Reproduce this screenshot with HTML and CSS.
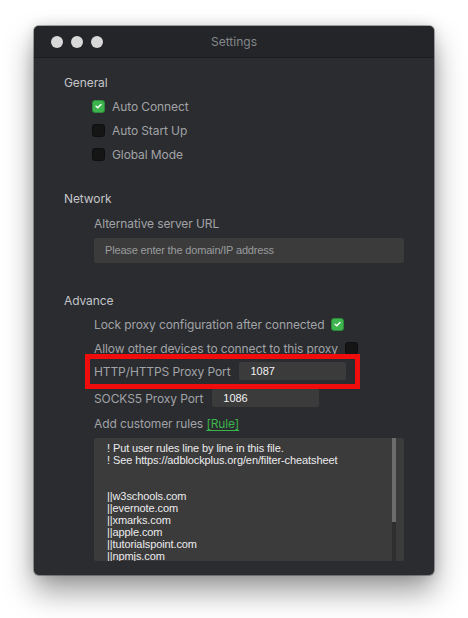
FILE: index.html
```html
<!DOCTYPE html>
<html>
<head>
<meta charset="utf-8">
<link rel="stylesheet" href="styles.css">
</head>
<body>
<div class="window">
  <div class="titlebar">
    <div class="lights"><span class="light"></span><span class="light"></span><span class="light"></span></div>
    <div class="title">Settings</div>
  </div>
  <div class="content">
    <div class="heading first">General</div>
    <div class="check-row"><span class="box checked"><svg viewBox="0 0 12 12" width="12" height="12"><path d="M3.3 6.2 L5.2 8 L8.7 4.4" fill="none" stroke="#fff" stroke-width="1.5" stroke-linecap="round" stroke-linejoin="round"/></svg></span><span class="label">Auto Connect</span></div>
    <div class="check-row"><span class="box"></span><span class="label">Auto Start Up</span></div>
    <div class="check-row"><span class="box"></span><span class="label">Global Mode</span></div>

    <div class="heading net">Network</div>
    <div class="sub-row url-label"><span class="label">Alternative server URL</span></div>
    <div class="url-input">Please enter the domain/IP address</div>

    <div class="heading adv">Advance</div>
    <div class="sub-row"><span class="label">Lock proxy configuration after connected</span><span class="box checked after"><svg viewBox="0 0 12 12" width="12" height="12"><path d="M3.3 6.2 L5.2 8 L8.7 4.4" fill="none" stroke="#fff" stroke-width="1.5" stroke-linecap="round" stroke-linejoin="round"/></svg></span></div>
    <div class="sub-row"><span class="label">Allow other devices to connect to this proxy</span><span class="box after"></span></div>
    <div class="sub-row port-row highlight"><span class="label">HTTP/HTTPS Proxy Port</span><span class="port-input">1087</span></div>
    <div class="sub-row port-row socks"><span class="label">SOCKS5 Proxy Port</span><span class="port-input">1086</span></div>
    <div class="sub-row rules-row"><span class="label">Add customer rules <span class="rule-link">[Rule]</span></span></div>
    <div class="rules">
      <div class="rules-text">! Put user rules line by line in this file.
! See https://adblockplus.org/en/filter-cheatsheet


||w3schools.com
||evernote.com
||xmarks.com
||apple.com
||tutorialspoint.com
||npmjs.com</div>
      <div class="scroll-track"><div class="scroll-thumb"></div></div>
    </div>
  </div>
</div>
</body>
</html>
```

FILE: styles.css
```css
*, *::before, *::after { box-sizing: border-box; }
html, body { margin: 0; background: #ffffff; }
body {
  padding: 26px 0 0 34px;
  min-height: 618px;
  font-family: "Inter", "Liberation Sans", sans-serif;
  font-size: 12px;
}
.window {
  width: 400px;
  height: 549px;
  background: #2a2c30;
  border-radius: 5px;
  overflow: hidden;
  box-shadow: 0 0 0 1px rgba(0,0,0,0.3), 0 0 14px rgba(0,0,0,0.14), 0 16px 30px rgba(0,0,0,0.4);
  display: flex;
  flex-direction: column;
}
.titlebar {
  height: 32px;
  flex: none;
  background: #232529;
  border-bottom: 1px solid #1b1c1f;
  display: flex;
  align-items: center;
  position: relative;
}
.lights {
  display: flex;
  gap: 8px;
  padding-left: 17px;
}
.light {
  width: 12px;
  height: 12px;
  border-radius: 50%;
  background: #d9d9da;
}
.title {
  position: absolute;
  left: 0;
  right: 0;
  text-align: center;
  color: #85878a;
  font-size: 12px;
}
.content {
  padding: 14px 30px 0 30px;
  color: #a2a3a6;
  letter-spacing: -0.1px;
}
.heading {
  height: 24px;
  line-height: 24px;
  color: #c4c5c8;
  font-size: 12px;
}
.heading.first { height: 22px; line-height: 22px; }
.heading.net { margin-top: 21px; }
.heading.adv { margin-top: 27px; height: 22px; line-height: 22px; }
.check-row {
  height: 24px;
  display: flex;
  align-items: center;
  padding-left: 28px;
}
.check-row .label { margin-left: 7px; }
.box {
  width: 13px;
  height: 13px;
  border-radius: 3px;
  background: #151516;
  border: 1px solid #0e0e0f;
  display: inline-flex;
  align-items: center;
  justify-content: center;
  flex: none;
}
.box.checked {
  background: #3db44d;
  border-color: #2c8c39;
}
.box.after { margin-left: 7px; }
.sub-row {
  height: 24px;
  display: flex;
  align-items: center;
  padding-left: 30px;
}
.url-input {
  margin: 3px 0 0 30px;
  height: 25px;
  background: #3b3b3c;
  border-radius: 2px;
  color: #9a9b9d;
  font-family: "Liberation Sans", Arial, sans-serif;
  font-size: 11px;
  letter-spacing: -0.17px;
  line-height: 25px;
  padding-left: 11px;
}
.port-row { height: 22px; }
.port-input {
  margin-left: 9px;
  width: 107px;
  height: 18px;
  background: #3b3b3c;
  border-radius: 2px;
  color: #f2f2f2;
  font-family: "Liberation Sans", Arial, sans-serif;
  font-size: 11px;
  letter-spacing: 0;
  line-height: 18px;
  padding-left: 11px;
}
.highlight { position: relative; }
.highlight::after {
  content: "";
  position: absolute;
  left: 21px;
  top: -6px;
  width: 275px;
  height: 35px;
  border: 5px solid #f20d0d;
}
.socks { margin-top: 6px; height: 20px; }
.rules-row { height: 30px; }
.rule-link {
  color: #3ab54a;
  text-decoration: underline;
  text-underline-offset: 2px;
}
.rules {
  margin-left: 30px;
  height: 123px;
  background: #3b3b3c;
  border-radius: 2px;
  display: flex;
  overflow: hidden;
}
.rules-text {
  flex: 1;
  white-space: pre;
  color: #ececed;
  font-family: "Liberation Sans", Arial, sans-serif;
  font-size: 11px;
  letter-spacing: -0.1px;
  line-height: 12px;
  padding: 4px 0 0 13px;
  overflow: hidden;
}
.scroll-track {
  width: 4px;
  margin-right: 8px;
  background: #2e2e2f;
  flex: none;
}
.scroll-thumb {
  height: 84px;
  background: #6c6c6d;
}
```
